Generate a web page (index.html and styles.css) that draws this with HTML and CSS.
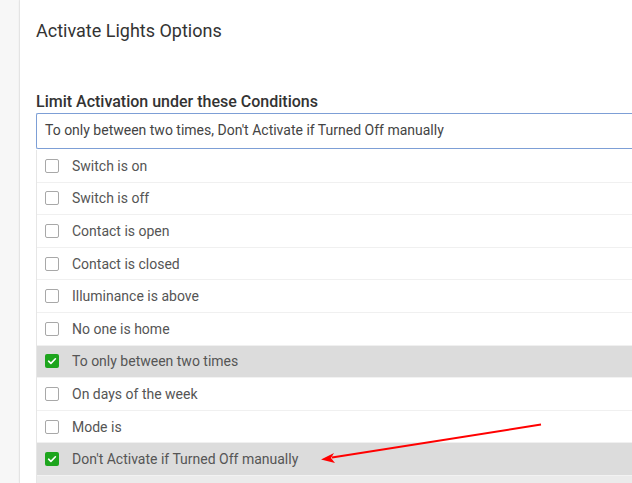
FILE: index.html
```html
<!DOCTYPE html>
<html>
<head>
<meta charset="utf-8">
<link rel="stylesheet" href="styles.css">
</head>
<body>
<div class="page">
  <div class="rail"></div>
  <div class="panel">
    <h1 class="title">Activate Lights Options</h1>
    <div class="label">Limit Activation under these Conditions</div>
    <div class="select">To only between two times, Don't Activate if Turned Off manually</div>
    <ul class="list">
      <li class="row"><span class="cb"></span>Switch is on</li>
      <li class="row"><span class="cb"></span>Switch is off</li>
      <li class="row"><span class="cb"></span>Contact is open</li>
      <li class="row"><span class="cb"></span>Contact is closed</li>
      <li class="row"><span class="cb"></span>Illuminance is above</li>
      <li class="row"><span class="cb"></span>No one is home</li>
      <li class="row sel"><span class="cb on"><svg viewBox="0 0 14 14" width="14" height="14"><path d="M3.6 7.2 L5.9 9.4 L10.4 4.8" fill="none" stroke="#fff" stroke-width="1.6" stroke-linecap="round" stroke-linejoin="round"/></svg></span>To only between two times</li>
      <li class="row"><span class="cb"></span>On days of the week</li>
      <li class="row"><span class="cb"></span>Mode is</li>
      <li class="row sel"><span class="cb on"><svg viewBox="0 0 14 14" width="14" height="14"><path d="M3.6 7.2 L5.9 9.4 L10.4 4.8" fill="none" stroke="#fff" stroke-width="1.6" stroke-linecap="round" stroke-linejoin="round"/></svg></span>Don't Activate if Turned Off manually</li>
      <li class="row more"></li>
    </ul>
  </div>
  <svg class="arrow" width="632" height="483" viewBox="0 0 632 483">
    <line x1="541" y1="424.5" x2="332" y2="457.5" stroke="#f00" stroke-width="2"/>
    <path d="M321 459.5 L334 453 L331 458 L335 463 Z" fill="#f00"/>
  </svg>
</div>
</body>
</html>
```
FILE: styles.css
```css
html, body {
  margin: 0;
  padding: 0;
  background: #fff;
  overflow: hidden;
}
.page {
  position: relative;
  display: flex;
  width: 632px;
  height: 483px;
  overflow: hidden;
  font-family: Roboto, "Liberation Sans", sans-serif;
}
.rail {
  width: 19px;
  flex: none;
  background: #f7f7f7;
  border-right: 1px solid #ececec;
}
.panel {
  flex: 1;
  padding-left: 16px;
  min-width: 0;
  box-shadow: -1px 0 2px rgba(0,0,0,0.05);
}
.title {
  margin: 20px 0 0 0;
  font-size: 18px;
  font-weight: 400;
  line-height: 22px;
  color: #333;
}
.label {
  margin-top: 51px;
  font-size: 16px;
  font-weight: 500;
  line-height: 18px;
  color: #333;
}
.select {
  margin-top: 2px;
  box-sizing: border-box;
  height: 36px;
  border: 1px solid #7d9fd6;
  border-right: none;
  border-radius: 2px 0 0 2px;
  padding: 0 0 0 8px;
  font-size: 14px;
  line-height: 33px;
  color: #444;
  white-space: nowrap;
}
.list {
  list-style: none;
  margin: 1px 0 0 0;
  padding: 0;
  border-left: 1px solid #e6e6e6;
}
.row {
  display: flex;
  align-items: center;
  height: 31.6px;
  border-bottom: 1px solid #f0f0f0;
  padding-left: 8px;
  font-size: 14px;
  color: #555;
  white-space: nowrap;
}
.row.sel {
  background: #dcdcdc;
  border-bottom-color: #f2f2f2;
}
.row.more {
  background: #ebebeb;
}
.cb {
  width: 12px;
  height: 12px;
  border: 1px solid #a8a8a8;
  border-radius: 2px;
  background: #fff;
  margin-right: 13px;
  flex: none;
  display: flex;
  align-items: center;
  justify-content: center;
}
.cb.on {
  width: 14px;
  height: 14px;
  border: none;
  background: #1da51d;
}
.arrow {
  position: absolute;
  left: 0;
  top: 0;
  pointer-events: none;
}
```
